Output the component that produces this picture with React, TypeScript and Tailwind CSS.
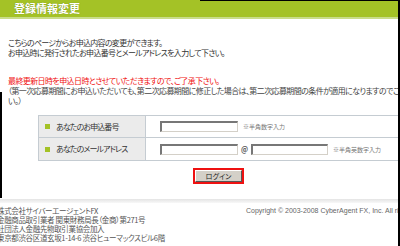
export default function App() {
  return (
    <div className="relative w-[400px] h-[246px] overflow-hidden bg-white text-[#333] font-['Noto_Sans_CJK_JP',sans-serif] [font-feature-settings:'palt']">
      <div className="w-[440px]">
        {/* Header */}
        <div className="h-[17px] bg-[#a4c226] pl-[14px] text-[11px] font-bold leading-[17px] text-white [text-shadow:0_0_1px_#6b8010]">
          登録情報変更
        </div>
        <div className="h-[2px] bg-[#c9dc8a]" />

        {/* Intro */}
        <div className="pl-[8px] pt-[19px] text-[8px] leading-[10px] tracking-[-0.7px]">
          <p>こちらのページからお申込内容の変更ができます。</p>
          <p>お申込時に発行されたお申込番号とメールアドレスを入力して下さい。</p>
        </div>

        <div className="pl-[8px] pt-[18px] text-[8px] leading-[10px] tracking-[-0.6px]">
          <p className="text-[#f01010]">最終更新日時を申込日時とさせていただきますので、ご了承下さい。</p>
          <p className="text-[#444]">
            <span className="whitespace-nowrap">
              （第一次応募期間にお申込いただいても、第二次応募期間に修正した場合は、第二次応募期間の条件が適用になりますのでご注意下さ
            </span>
            <br />
            い。）
          </p>
        </div>

        {/* Form table */}
        <div className="ml-[38px] mt-[9px] w-[420px] border border-[#c5ccd2] text-[8px] tracking-[-0.9px]">
          <div className="flex h-[22px] border-b border-[#c5ccd2]">
            <div className="flex w-[107px] items-center gap-[6px] border-r border-[#c5ccd2] bg-[#ebebeb] pl-[6px]">
              <span className="h-[5px] w-[5px] bg-[#a4c226]" />
              <span>あなたのお申込番号</span>
            </div>
            <div className="flex items-center pl-[14px]">
              <span className="h-[11px] w-[78px] border-t-2 border-l-2 border-r border-b border-t-[#777] border-l-[#777] border-r-[#d4d0c8] border-b-[#d4d0c8] bg-white" />
              <span className="ml-[5px] text-[6px] tracking-normal text-[#777]">※半角数字入力</span>
            </div>
          </div>
          <div className="flex h-[22px]">
            <div className="flex w-[107px] items-center gap-[6px] border-r border-[#c5ccd2] bg-[#ebebeb] pl-[6px]">
              <span className="h-[5px] w-[5px] bg-[#a4c226]" />
              <span>あなたのメールアドレス</span>
            </div>
            <div className="flex items-center pl-[14px]">
              <span className="h-[11px] w-[78px] border-t-2 border-l-2 border-r border-b border-t-[#777] border-l-[#777] border-r-[#d4d0c8] border-b-[#d4d0c8] bg-white" />
              <span className="mx-[3px] text-[7px] font-bold tracking-normal text-[#555]">@</span>
              <span className="h-[11px] w-[77px] border-t-2 border-l-2 border-r border-b border-t-[#777] border-l-[#777] border-r-[#d4d0c8] border-b-[#d4d0c8] bg-white" />
              <span className="ml-[5px] text-[6px] tracking-normal text-[#777]">※半角英数字入力</span>
            </div>
          </div>
        </div>

        {/* Login button */}
        <div className="ml-[193px] mt-[7px] w-[51px] border-2 border-[#ee1111]">
          <button className="flex h-[12px] w-full items-center justify-center border border-t-white border-l-white border-r-[#555] border-b-[#555] bg-[#d4d0c8] text-[7px] leading-none text-[#222]">
            ログイン
          </button>
        </div>

        {/* Footer */}
        <div className="mt-[15px] h-[4px] bg-gradient-to-b from-[#e4e4e4] to-[#f8f8f8]" />
        <div className="flex pt-[3px] text-[#555]">
          <div className="-ml-[3px] w-[249px] shrink-0 whitespace-pre text-[7.5px] leading-[9px] tracking-[-0.35px]">
            <p>株式会社サイバーエージェントFX</p>
            <p>金融商品取引業者 関東財務局長（金商）第271号</p>
            <p>社団法人金融先物取引業協会加入</p>
            <p>東京都渋谷区道玄坂1-14-6 渋谷ヒューマックスビル6階</p>
          </div>
          <p className="whitespace-nowrap pt-[1px] font-['Liberation_Sans',sans-serif] text-[7px] leading-[8px] text-[#666]">
            Copyright © 2003-2008 CyberAgent FX, Inc. All rights reserved.
          </p>
        </div>
      </div>

      {/* screen edges */}
      <div className="absolute right-0 top-0 h-full w-[2px] bg-black" />
      <div className="absolute left-[200px] right-0 top-0 h-px bg-black" />
      <div className="absolute left-0 top-[92px] h-[106px] w-[2px] bg-black" />
    </div>
  );
}
